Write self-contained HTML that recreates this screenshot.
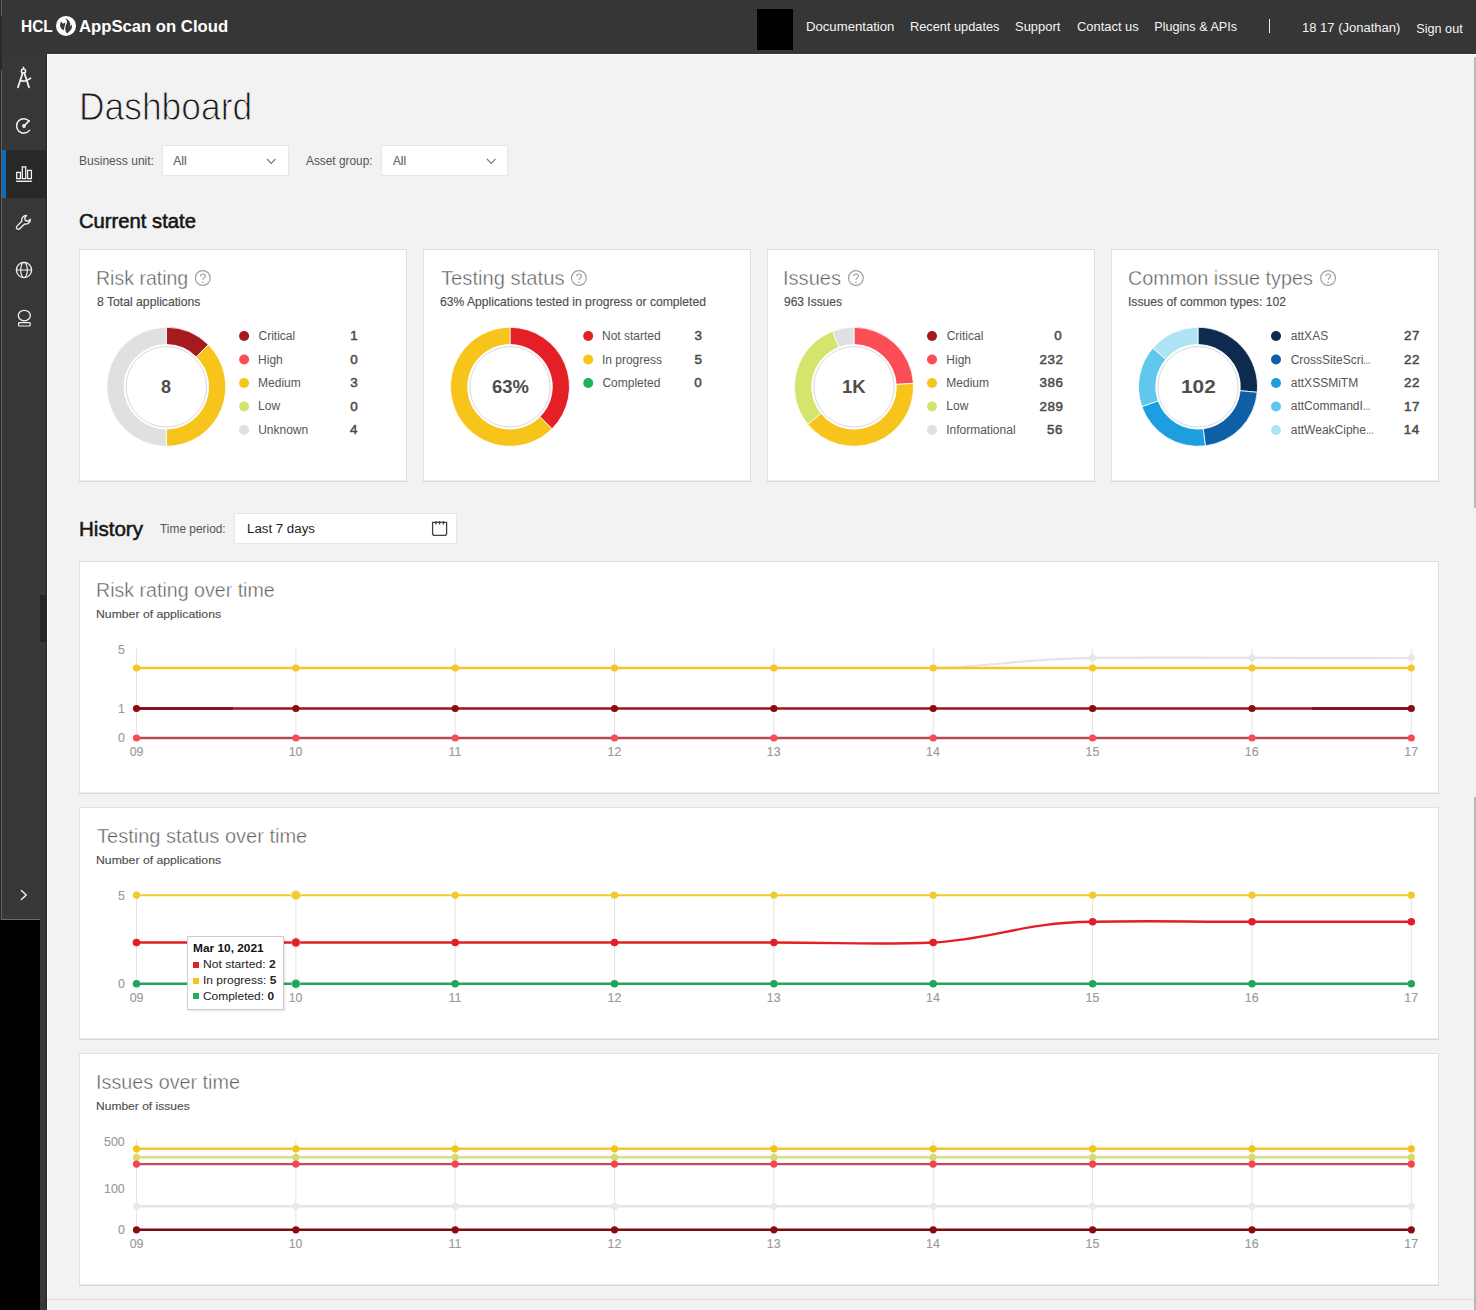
<!DOCTYPE html>
<html><head><meta charset="utf-8"><title>Dashboard</title>
<style>
html,body{margin:0;padding:0;}
body{width:1476px;height:1310px;position:relative;overflow:hidden;background:#f2f2f2;font-family:"Liberation Sans", sans-serif;}
body>div{position:absolute;}
.t{white-space:nowrap;}
svg{position:absolute;left:0;top:0;}
</style></head><body>
<div style="left:0px;top:0px;width:1476px;height:54px;background:#363636;"></div>
<div style="left:0px;top:54px;width:47px;height:866px;background:#373737;"></div>
<div style="left:0px;top:0px;width:1px;height:920px;background:#2a2a2a;"></div>
<div style="left:0px;top:920px;width:40px;height:390px;background:#000;"></div>
<div style="left:40px;top:920px;width:7px;height:390px;background:#383838;"></div>
<div style="left:1px;top:0px;width:1px;height:920px;background:#5e5e5e;"></div>
<div style="left:1px;top:919px;width:39px;height:1px;background:#6a6a6a;"></div>
<div style="left:1px;top:16px;width:1px;height:54px;background:#282828;"></div>
<div style="left:40px;top:595px;width:7px;height:47px;background:#262626;"></div>
<div style="left:46px;top:54px;width:1px;height:1256px;background:#262626;"></div>
<div style="left:47px;top:54px;width:1429px;height:1256px;background:#f2f2f2;"></div>
<div style="left:47px;top:54px;width:1429px;height:1px;background:#ffffff;"></div>
<div style="left:47px;top:54px;width:1px;height:1256px;background:#fdfdfd;"></div>
<div style="left:47px;top:1299px;width:1429px;height:1px;background:#dcdcdc;"></div>
<div style="left:2px;top:150px;width:45px;height:48px;background:#282828;"></div>
<div style="left:2px;top:150px;width:4px;height:48px;background:#0f6cb8;"></div>
<div style="left:757px;top:9px;width:36px;height:41px;background:#000;"></div>
<div style="left:1269px;top:19px;width:1px;height:14px;background:#f0f0f0;"></div>
<div style="left:1474px;top:57px;width:2px;height:451px;background:#b7b9ba;"></div>
<div style="left:1474px;top:797px;width:2px;height:513px;background:#b4b6b8;"></div>
<div style="left:162px;top:145px;width:127px;height:31px;background:#fff;box-shadow:0 0 0 1px #e6e6e6 inset;"></div>
<div style="left:381px;top:145px;width:127px;height:31px;background:#fff;box-shadow:0 0 0 1px #e6e6e6 inset;"></div>
<div style="left:79px;top:249px;width:328px;height:233px;background:#fff;border:1px solid #e0e0e0;border-bottom-color:#d6d6d6;box-sizing:border-box;box-shadow:inset 0 -2px 1px -1px #ebebeb;"></div>
<div style="left:423px;top:249px;width:328px;height:233px;background:#fff;border:1px solid #e0e0e0;border-bottom-color:#d6d6d6;box-sizing:border-box;box-shadow:inset 0 -2px 1px -1px #ebebeb;"></div>
<div style="left:767px;top:249px;width:328px;height:233px;background:#fff;border:1px solid #e0e0e0;border-bottom-color:#d6d6d6;box-sizing:border-box;box-shadow:inset 0 -2px 1px -1px #ebebeb;"></div>
<div style="left:1111px;top:249px;width:328px;height:233px;background:#fff;border:1px solid #e0e0e0;border-bottom-color:#d6d6d6;box-sizing:border-box;box-shadow:inset 0 -2px 1px -1px #ebebeb;"></div>
<div style="left:79px;top:561px;width:1360px;height:233px;background:#fff;border:1px solid #e0e0e0;border-bottom-color:#d6d6d6;box-sizing:border-box;box-shadow:inset 0 -2px 1px -1px #ebebeb;"></div>
<div style="left:79px;top:807px;width:1360px;height:233px;background:#fff;border:1px solid #e0e0e0;border-bottom-color:#d6d6d6;box-sizing:border-box;box-shadow:inset 0 -2px 1px -1px #ebebeb;"></div>
<div style="left:79px;top:1053px;width:1360px;height:233px;background:#fff;border:1px solid #e0e0e0;border-bottom-color:#d6d6d6;box-sizing:border-box;box-shadow:inset 0 -2px 1px -1px #ebebeb;"></div>
<div style="left:234px;top:513px;width:223px;height:31px;background:#fff;box-shadow:0 0 0 1px #e6e6e6 inset;"></div>
<svg width="1476" height="1310" viewBox="0 0 1476 1310">
<circle cx="202.8" cy="278" r="7.4" fill="none" stroke="#a0a0a0" stroke-width="1.2"/>
<path d="M200.5,276.2 C200.5,273.4 205.4,273.4 205.4,276 C205.4,278 202.8,278 202.8,280" fill="none" stroke="#a0a0a0" stroke-width="1.1"/>
<circle cx="202.8" cy="282.3" r="0.8" fill="#a0a0a0"/>
<circle cx="578.9" cy="278" r="7.4" fill="none" stroke="#a0a0a0" stroke-width="1.2"/>
<path d="M576.6,276.2 C576.6,273.4 581.5,273.4 581.5,276 C581.5,278 578.9,278 578.9,280" fill="none" stroke="#a0a0a0" stroke-width="1.1"/>
<circle cx="578.9" cy="282.3" r="0.8" fill="#a0a0a0"/>
<circle cx="855.9" cy="278" r="7.4" fill="none" stroke="#a0a0a0" stroke-width="1.2"/>
<path d="M853.6,276.2 C853.6,273.4 858.5,273.4 858.5,276 C858.5,278 855.9,278 855.9,280" fill="none" stroke="#a0a0a0" stroke-width="1.1"/>
<circle cx="855.9" cy="282.3" r="0.8" fill="#a0a0a0"/>
<circle cx="1328.1" cy="278" r="7.4" fill="none" stroke="#a0a0a0" stroke-width="1.2"/>
<path d="M1325.8,276.2 C1325.8,273.4 1330.7,273.4 1330.7,276 C1330.7,278 1328.1,278 1328.1,280" fill="none" stroke="#a0a0a0" stroke-width="1.1"/>
<circle cx="1328.1" cy="282.3" r="0.8" fill="#a0a0a0"/>
<path d="M166.30,327.30 A59.5,59.5 0 0 1 208.37,344.73 L196.21,356.89 A42.3,42.3 0 0 0 166.30,344.50 Z" fill="#a51a1d" stroke="#fff" stroke-width="0.8"/>
<path d="M208.37,344.73 A59.5,59.5 0 0 1 166.30,446.30 L166.30,429.10 A42.3,42.3 0 0 0 196.21,356.89 Z" fill="#f7c41c" stroke="#fff" stroke-width="0.8"/>
<path d="M166.30,446.30 A59.5,59.5 0 0 1 166.30,327.30 L166.30,344.50 A42.3,42.3 0 0 0 166.30,429.10 Z" fill="#e0e0e0" stroke="#fff" stroke-width="0.8"/>
<circle cx="166.3" cy="386.8" r="40.2" fill="#fff" stroke="#d8d9de" stroke-width="1"/>
<path d="M510.00,327.30 A59.5,59.5 0 0 1 552.07,428.87 L539.91,416.71 A42.3,42.3 0 0 0 510.00,344.50 Z" fill="#e41f26" stroke="#fff" stroke-width="0.8"/>
<path d="M552.07,428.87 A59.5,59.5 0 1 1 510.00,327.30 L510.00,344.50 A42.3,42.3 0 1 0 539.91,416.71 Z" fill="#f7c41c" stroke="#fff" stroke-width="0.8"/>
<circle cx="510" cy="386.8" r="40.2" fill="#fff" stroke="#d8d9de" stroke-width="1"/>
<path d="M854.00,327.30 A59.5,59.5 0 0 1 913.40,383.40 L896.23,384.39 A42.3,42.3 0 0 0 854.00,344.50 Z" fill="#fa4d56" stroke="#fff" stroke-width="0.8"/>
<path d="M913.40,383.40 A59.5,59.5 0 0 1 807.74,424.22 L821.11,413.40 A42.3,42.3 0 0 0 896.23,384.39 Z" fill="#f7c41c" stroke="#fff" stroke-width="0.8"/>
<path d="M807.74,424.22 A59.5,59.5 0 0 1 832.74,331.23 L838.89,347.29 A42.3,42.3 0 0 0 821.11,413.40 Z" fill="#d4e46c" stroke="#fff" stroke-width="0.8"/>
<path d="M832.74,331.23 A59.5,59.5 0 0 1 854.00,327.30 L854.00,344.50 A42.3,42.3 0 0 0 838.89,347.29 Z" fill="#e0e0e0" stroke="#fff" stroke-width="0.8"/>
<circle cx="854" cy="386.8" r="40.2" fill="#fff" stroke="#d8d9de" stroke-width="1"/>
<path d="M1198.00,327.30 A59.5,59.5 0 0 1 1257.25,392.29 L1240.12,390.70 A42.3,42.3 0 0 0 1198.00,344.50 Z" fill="#0d2b4e" stroke="#fff" stroke-width="0.8"/>
<path d="M1257.25,392.29 A59.5,59.5 0 0 1 1205.31,445.85 L1203.20,428.78 A42.3,42.3 0 0 0 1240.12,390.70 Z" fill="#0f5fa6" stroke="#fff" stroke-width="0.8"/>
<path d="M1205.31,445.85 A59.5,59.5 0 0 1 1141.88,406.58 L1158.10,400.86 A42.3,42.3 0 0 0 1203.20,428.78 Z" fill="#1d9ee0" stroke="#fff" stroke-width="0.8"/>
<path d="M1141.88,406.58 A59.5,59.5 0 0 1 1152.82,348.09 L1165.88,359.28 A42.3,42.3 0 0 0 1158.10,400.86 Z" fill="#62c7ec" stroke="#fff" stroke-width="0.8"/>
<path d="M1152.82,348.09 A59.5,59.5 0 0 1 1198.00,327.30 L1198.00,344.50 A42.3,42.3 0 0 0 1165.88,359.28 Z" fill="#aee3f3" stroke="#fff" stroke-width="0.8"/>
<circle cx="1198" cy="386.8" r="40.2" fill="#fff" stroke="#d8d9de" stroke-width="1"/>
<circle cx="244.1" cy="336.0" r="5" fill="#a51a1d"/>
<circle cx="244.1" cy="359.5" r="5" fill="#fa4d56"/>
<circle cx="244.1" cy="383.0" r="5" fill="#f7c41c"/>
<circle cx="244.1" cy="406.5" r="5" fill="#d4e46c"/>
<circle cx="244.1" cy="430.0" r="5" fill="#e0e0e0"/>
<circle cx="588.2" cy="336.0" r="5" fill="#e41f26"/>
<circle cx="588.2" cy="359.5" r="5" fill="#f7c41c"/>
<circle cx="588.2" cy="383.0" r="5" fill="#1db35c"/>
<circle cx="932" cy="336.0" r="5" fill="#a51a1d"/>
<circle cx="932" cy="359.5" r="5" fill="#fa4d56"/>
<circle cx="932" cy="383.0" r="5" fill="#f7c41c"/>
<circle cx="932" cy="406.5" r="5" fill="#d4e46c"/>
<circle cx="932" cy="430.0" r="5" fill="#e0e0e0"/>
<circle cx="1276" cy="336.0" r="5" fill="#0d2b4e"/>
<circle cx="1276" cy="359.5" r="5" fill="#0f5fa6"/>
<circle cx="1276" cy="383.0" r="5" fill="#1d9ee0"/>
<circle cx="1276" cy="406.5" r="5" fill="#62c7ec"/>
<circle cx="1276" cy="430.0" r="5" fill="#aee3f3"/>
<line x1="136.5" y1="648.5" x2="136.5" y2="738" stroke="#e4e4e4" stroke-width="1"/>
<line x1="295.85" y1="648.5" x2="295.85" y2="738" stroke="#e4e4e4" stroke-width="1"/>
<line x1="455.2" y1="648.5" x2="455.2" y2="738" stroke="#e4e4e4" stroke-width="1"/>
<line x1="614.55" y1="648.5" x2="614.55" y2="738" stroke="#e4e4e4" stroke-width="1"/>
<line x1="773.9" y1="648.5" x2="773.9" y2="738" stroke="#e4e4e4" stroke-width="1"/>
<line x1="933.25" y1="648.5" x2="933.25" y2="738" stroke="#e4e4e4" stroke-width="1"/>
<line x1="1092.6" y1="648.5" x2="1092.6" y2="738" stroke="#e4e4e4" stroke-width="1"/>
<line x1="1251.95" y1="648.5" x2="1251.95" y2="738" stroke="#e4e4e4" stroke-width="1"/>
<line x1="1411.3" y1="648.5" x2="1411.3" y2="738" stroke="#e4e4e4" stroke-width="1"/>
<path d="M136.5,668 L933.2,668 C978.2,668 1022.6,658.6 1092.6,657.8 C1152.6,657.2 1192.0,657.8 1252.0,657.8 L1411.3,658" fill="none" stroke="#e4e4e4" stroke-width="2.2"/>
<circle cx="1092.6" cy="657.8" r="3.4" fill="#e6e6e6"/>
<circle cx="1252.0" cy="657.8" r="3.4" fill="#e6e6e6"/>
<circle cx="1411.3" cy="657.8" r="3.4" fill="#e6e6e6"/>
<path d="M136.5,668 L295.9,668 L455.2,668 L614.5,668 L773.9,668 L933.2,668 L1092.6,668 L1252.0,668 L1411.3,668" fill="none" stroke="#f5c52a" stroke-width="2.6"/>
<circle cx="136.5" cy="668" r="3.6" fill="#f5c52a"/>
<circle cx="295.9" cy="668" r="3.6" fill="#f5c52a"/>
<circle cx="455.2" cy="668" r="3.6" fill="#f5c52a"/>
<circle cx="614.5" cy="668" r="3.6" fill="#f5c52a"/>
<circle cx="773.9" cy="668" r="3.6" fill="#f5c52a"/>
<circle cx="933.2" cy="668" r="3.6" fill="#f5c52a"/>
<circle cx="1092.6" cy="668" r="3.6" fill="#f5c52a"/>
<circle cx="1252.0" cy="668" r="3.6" fill="#f5c52a"/>
<circle cx="1411.3" cy="668" r="3.6" fill="#f5c52a"/>
<path d="M136.5,708.5 L295.9,708.5 L455.2,708.5 L614.5,708.5 L773.9,708.5 L933.2,708.5 L1092.6,708.5 L1252.0,708.5 L1411.3,708.5" fill="none" stroke="#9a1520" stroke-width="2.4"/>
<path d="M136.5,708.5 L233,708.5 M1312,708.5 L1411,708.5" stroke="#820b12" stroke-width="2.6"/>
<circle cx="136.5" cy="708.5" r="3.6" fill="#8a0b12"/>
<circle cx="295.9" cy="708.5" r="3.6" fill="#8a0b12"/>
<circle cx="455.2" cy="708.5" r="3.6" fill="#8a0b12"/>
<circle cx="614.5" cy="708.5" r="3.6" fill="#8a0b12"/>
<circle cx="773.9" cy="708.5" r="3.6" fill="#8a0b12"/>
<circle cx="933.2" cy="708.5" r="3.6" fill="#8a0b12"/>
<circle cx="1092.6" cy="708.5" r="3.6" fill="#8a0b12"/>
<circle cx="1252.0" cy="708.5" r="3.6" fill="#8a0b12"/>
<circle cx="1411.3" cy="708.5" r="3.6" fill="#8a0b12"/>
<path d="M136.5,738 L295.9,738 L455.2,738 L614.5,738 L773.9,738 L933.2,738 L1092.6,738 L1252.0,738 L1411.3,738" fill="none" stroke="#b44a58" stroke-width="2.3"/>
<circle cx="136.5" cy="738" r="3.6" fill="#f74b57"/>
<circle cx="295.9" cy="738" r="3.6" fill="#f74b57"/>
<circle cx="455.2" cy="738" r="3.6" fill="#f74b57"/>
<circle cx="614.5" cy="738" r="3.6" fill="#f74b57"/>
<circle cx="773.9" cy="738" r="3.6" fill="#f74b57"/>
<circle cx="933.2" cy="738" r="3.6" fill="#f74b57"/>
<circle cx="1092.6" cy="738" r="3.6" fill="#f74b57"/>
<circle cx="1252.0" cy="738" r="3.6" fill="#f74b57"/>
<circle cx="1411.3" cy="738" r="3.6" fill="#f74b57"/>
<line x1="136.5" y1="895" x2="136.5" y2="984" stroke="#e4e4e4" stroke-width="1"/>
<line x1="295.85" y1="895" x2="295.85" y2="984" stroke="#e4e4e4" stroke-width="1"/>
<line x1="455.2" y1="895" x2="455.2" y2="984" stroke="#e4e4e4" stroke-width="1"/>
<line x1="614.55" y1="895" x2="614.55" y2="984" stroke="#e4e4e4" stroke-width="1"/>
<line x1="773.9" y1="895" x2="773.9" y2="984" stroke="#e4e4e4" stroke-width="1"/>
<line x1="933.25" y1="895" x2="933.25" y2="984" stroke="#e4e4e4" stroke-width="1"/>
<line x1="1092.6" y1="895" x2="1092.6" y2="984" stroke="#e4e4e4" stroke-width="1"/>
<line x1="1251.95" y1="895" x2="1251.95" y2="984" stroke="#e4e4e4" stroke-width="1"/>
<line x1="1411.3" y1="895" x2="1411.3" y2="984" stroke="#e4e4e4" stroke-width="1"/>
<path d="M136.5,895.2 L295.9,895.2 L455.2,895.2 L614.5,895.2 L773.9,895.2 L933.2,895.2 L1092.6,895.2 L1252.0,895.2 L1411.3,895.2" fill="none" stroke="#efcb2c" stroke-width="2.0"/>
<circle cx="136.5" cy="895.2" r="3.6" fill="#efcb2c"/>
<circle cx="295.9" cy="895.2" r="3.6" fill="#efcb2c"/>
<circle cx="455.2" cy="895.2" r="3.6" fill="#efcb2c"/>
<circle cx="614.5" cy="895.2" r="3.6" fill="#efcb2c"/>
<circle cx="773.9" cy="895.2" r="3.6" fill="#efcb2c"/>
<circle cx="933.2" cy="895.2" r="3.6" fill="#efcb2c"/>
<circle cx="1092.6" cy="895.2" r="3.6" fill="#efcb2c"/>
<circle cx="1252.0" cy="895.2" r="3.6" fill="#efcb2c"/>
<circle cx="1411.3" cy="895.2" r="3.6" fill="#efcb2c"/>
<path d="M136.5,942.5 L773.9,942.5 C843.9,942.5 873.2,945.0 933.2,942.5 C993.2,939.5 1022.6,922.1999999999999 1092.6,921.8 C1152.6,920.4 1182.0,921.8 1252.0,921.8 L1411.3,921.8" fill="none" stroke="#e21f26" stroke-width="2.4"/>
<circle cx="136.5" cy="942.5" r="3.8" fill="#e21f26"/>
<circle cx="295.9" cy="942.5" r="3.8" fill="#e21f26"/>
<circle cx="455.2" cy="942.5" r="3.8" fill="#e21f26"/>
<circle cx="614.5" cy="942.5" r="3.8" fill="#e21f26"/>
<circle cx="773.9" cy="942.5" r="3.8" fill="#e21f26"/>
<circle cx="933.2" cy="942.5" r="3.8" fill="#e21f26"/>
<circle cx="1092.6" cy="921.8" r="3.8" fill="#e21f26"/>
<circle cx="1252.0" cy="921.8" r="3.8" fill="#e21f26"/>
<circle cx="1411.3" cy="921.8" r="3.8" fill="#e21f26"/>
<path d="M136.5,983.8 L295.9,983.8 L455.2,983.8 L614.5,983.8 L773.9,983.8 L933.2,983.8 L1092.6,983.8 L1252.0,983.8 L1411.3,983.8" fill="none" stroke="#22a45c" stroke-width="2.5"/>
<circle cx="136.5" cy="983.8" r="3.8" fill="#22a45c"/>
<circle cx="295.9" cy="983.8" r="3.8" fill="#22a45c"/>
<circle cx="455.2" cy="983.8" r="3.8" fill="#22a45c"/>
<circle cx="614.5" cy="983.8" r="3.8" fill="#22a45c"/>
<circle cx="773.9" cy="983.8" r="3.8" fill="#22a45c"/>
<circle cx="933.2" cy="983.8" r="3.8" fill="#22a45c"/>
<circle cx="1092.6" cy="983.8" r="3.8" fill="#22a45c"/>
<circle cx="1252.0" cy="983.8" r="3.8" fill="#22a45c"/>
<circle cx="1411.3" cy="983.8" r="3.8" fill="#22a45c"/>
<circle cx="295.9" cy="895.2" r="4.3" fill="#efcb2c" stroke="#f5dc84" stroke-width="1.2"/>
<circle cx="295.9" cy="942.5" r="4.3" fill="#e21f26" stroke="#f08a8d" stroke-width="0.8"/>
<circle cx="295.9" cy="983.8" r="4.3" fill="#22a45c" stroke="#8fd6ab" stroke-width="0.8"/>
<line x1="136.5" y1="1140.3" x2="136.5" y2="1229.8" stroke="#e4e4e4" stroke-width="1"/>
<line x1="295.85" y1="1140.3" x2="295.85" y2="1229.8" stroke="#e4e4e4" stroke-width="1"/>
<line x1="455.2" y1="1140.3" x2="455.2" y2="1229.8" stroke="#e4e4e4" stroke-width="1"/>
<line x1="614.55" y1="1140.3" x2="614.55" y2="1229.8" stroke="#e4e4e4" stroke-width="1"/>
<line x1="773.9" y1="1140.3" x2="773.9" y2="1229.8" stroke="#e4e4e4" stroke-width="1"/>
<line x1="933.25" y1="1140.3" x2="933.25" y2="1229.8" stroke="#e4e4e4" stroke-width="1"/>
<line x1="1092.6" y1="1140.3" x2="1092.6" y2="1229.8" stroke="#e4e4e4" stroke-width="1"/>
<line x1="1251.95" y1="1140.3" x2="1251.95" y2="1229.8" stroke="#e4e4e4" stroke-width="1"/>
<line x1="1411.3" y1="1140.3" x2="1411.3" y2="1229.8" stroke="#e4e4e4" stroke-width="1"/>
<path d="M136.5,1206.3 L295.9,1206.3 L455.2,1206.3 L614.5,1206.3 L773.9,1206.3 L933.2,1206.3 L1092.6,1206.3 L1252.0,1206.3 L1411.3,1206.3" fill="none" stroke="#e6e6e6" stroke-width="2.4"/>
<circle cx="136.5" cy="1206.3" r="3.6" fill="#e9e9e9"/>
<circle cx="295.9" cy="1206.3" r="3.6" fill="#e9e9e9"/>
<circle cx="455.2" cy="1206.3" r="3.6" fill="#e9e9e9"/>
<circle cx="614.5" cy="1206.3" r="3.6" fill="#e9e9e9"/>
<circle cx="773.9" cy="1206.3" r="3.6" fill="#e9e9e9"/>
<circle cx="933.2" cy="1206.3" r="3.6" fill="#e9e9e9"/>
<circle cx="1092.6" cy="1206.3" r="3.6" fill="#e9e9e9"/>
<circle cx="1252.0" cy="1206.3" r="3.6" fill="#e9e9e9"/>
<circle cx="1411.3" cy="1206.3" r="3.6" fill="#e9e9e9"/>
<path d="M136.5,1148.8 L295.9,1148.8 L455.2,1148.8 L614.5,1148.8 L773.9,1148.8 L933.2,1148.8 L1092.6,1148.8 L1252.0,1148.8 L1411.3,1148.8" fill="none" stroke="#f4c42a" stroke-width="2.4"/>
<circle cx="136.5" cy="1148.8" r="3.6" fill="#f5c21b"/>
<circle cx="295.9" cy="1148.8" r="3.6" fill="#f5c21b"/>
<circle cx="455.2" cy="1148.8" r="3.6" fill="#f5c21b"/>
<circle cx="614.5" cy="1148.8" r="3.6" fill="#f5c21b"/>
<circle cx="773.9" cy="1148.8" r="3.6" fill="#f5c21b"/>
<circle cx="933.2" cy="1148.8" r="3.6" fill="#f5c21b"/>
<circle cx="1092.6" cy="1148.8" r="3.6" fill="#f5c21b"/>
<circle cx="1252.0" cy="1148.8" r="3.6" fill="#f5c21b"/>
<circle cx="1411.3" cy="1148.8" r="3.6" fill="#f5c21b"/>
<path d="M136.5,1157.3 L295.9,1157.3 L455.2,1157.3 L614.5,1157.3 L773.9,1157.3 L933.2,1157.3 L1092.6,1157.3 L1252.0,1157.3 L1411.3,1157.3" fill="none" stroke="#d8e27e" stroke-width="2.4"/>
<circle cx="136.5" cy="1157.3" r="3.6" fill="#d2de68"/>
<circle cx="295.9" cy="1157.3" r="3.6" fill="#d2de68"/>
<circle cx="455.2" cy="1157.3" r="3.6" fill="#d2de68"/>
<circle cx="614.5" cy="1157.3" r="3.6" fill="#d2de68"/>
<circle cx="773.9" cy="1157.3" r="3.6" fill="#d2de68"/>
<circle cx="933.2" cy="1157.3" r="3.6" fill="#d2de68"/>
<circle cx="1092.6" cy="1157.3" r="3.6" fill="#d2de68"/>
<circle cx="1252.0" cy="1157.3" r="3.6" fill="#d2de68"/>
<circle cx="1411.3" cy="1157.3" r="3.6" fill="#d2de68"/>
<path d="M136.5,1164.1 L295.9,1164.1 L455.2,1164.1 L614.5,1164.1 L773.9,1164.1 L933.2,1164.1 L1092.6,1164.1 L1252.0,1164.1 L1411.3,1164.1" fill="none" stroke="#bf4b5a" stroke-width="2.4"/>
<circle cx="136.5" cy="1164.1" r="3.6" fill="#f7434f"/>
<circle cx="295.9" cy="1164.1" r="3.6" fill="#f7434f"/>
<circle cx="455.2" cy="1164.1" r="3.6" fill="#f7434f"/>
<circle cx="614.5" cy="1164.1" r="3.6" fill="#f7434f"/>
<circle cx="773.9" cy="1164.1" r="3.6" fill="#f7434f"/>
<circle cx="933.2" cy="1164.1" r="3.6" fill="#f7434f"/>
<circle cx="1092.6" cy="1164.1" r="3.6" fill="#f7434f"/>
<circle cx="1252.0" cy="1164.1" r="3.6" fill="#f7434f"/>
<circle cx="1411.3" cy="1164.1" r="3.6" fill="#f7434f"/>
<path d="M136.5,1229.8 L295.9,1229.8 L455.2,1229.8 L614.5,1229.8 L773.9,1229.8 L933.2,1229.8 L1092.6,1229.8 L1252.0,1229.8 L1411.3,1229.8" fill="none" stroke="#7a0c12" stroke-width="2.4"/>
<circle cx="136.5" cy="1229.8" r="3.6" fill="#880c12"/>
<circle cx="295.9" cy="1229.8" r="3.6" fill="#880c12"/>
<circle cx="455.2" cy="1229.8" r="3.6" fill="#880c12"/>
<circle cx="614.5" cy="1229.8" r="3.6" fill="#880c12"/>
<circle cx="773.9" cy="1229.8" r="3.6" fill="#880c12"/>
<circle cx="933.2" cy="1229.8" r="3.6" fill="#880c12"/>
<circle cx="1092.6" cy="1229.8" r="3.6" fill="#880c12"/>
<circle cx="1252.0" cy="1229.8" r="3.6" fill="#880c12"/>
<circle cx="1411.3" cy="1229.8" r="3.6" fill="#880c12"/>
<g fill="none" stroke="#f2f2f2" stroke-width="1.6" stroke-linecap="round">
<circle cx="23.5" cy="71" r="2.1" stroke-width="1.5"/>
<path d="M23.5,67.2 L23.5,68.6" stroke-width="1.4"/>
<path d="M22.6,73.2 L18,87.3 M24.4,73.2 L29,87.3" stroke-width="1.8"/>
<path d="M20.6,80.6 Q23.6,81.8 27,80.2 L30.6,78.2" stroke-width="1.6"/>
<path d="M29.1,120.9 A7.25,7.25 0 1 0 29.5,130.4" stroke-width="1.5"/>
<path d="M24,126 L29.1,120.9" stroke-width="1.7"/>
<circle cx="24" cy="126" r="1.9" fill="#f2f2f2" stroke="none"/>
<rect x="16.7" y="172.4" width="3.7" height="6.2" stroke-width="1.3"/>
<rect x="22.3" y="166.9" width="3.4" height="11.7" stroke-width="1.3"/>
<rect x="27.6" y="170.4" width="3.8" height="8.2" stroke-width="1.3"/>
<path d="M16.2,181.3 L31.8,181.3" stroke-width="1.4" stroke-linecap="butt"/>
<path d="M26.6,215.5 A4.6,4.6 0 0 0 21.8,221.3 L17,226.1 A1.9,1.9 0 0 0 19.7,228.8 L24.5,224 A4.6,4.6 0 0 0 30.3,219.2 L28.1,221.2 L25.4,220.5 L24.7,217.8 Z" stroke-width="1.3" stroke-linejoin="round"/>
<circle cx="24" cy="270" r="7.6" stroke-width="1.3"/>
<path d="M16.4,270 L31.6,270" stroke-width="1.2"/><ellipse cx="24" cy="270" rx="3.3" ry="7.6" stroke-width="1.2"/>
<ellipse cx="24.3" cy="315.6" rx="6" ry="5.3" stroke-width="1.3"/>
<rect x="18.6" y="322.6" width="11.6" height="3.4" rx="0.8" stroke-width="1.2"/>
<path d="M21.4,890.5 L26.2,895 L21.4,899.5" stroke-width="1.4"/>
</g>
<circle cx="66" cy="25.9" r="10" fill="#fff"/>
<path d="M64.8,18.2 C67.5,19 70.3,21 70.3,24.5 C70.3,25.5 70,26.3 69.7,26.8 C70.6,26.2 71.3,25.4 71.7,24.6 C72.6,27.5 71.5,30.5 67,33.4 C65.5,31.5 64.9,29.5 65.3,27.5 C65.6,25.8 66.5,24.3 67,22.5 C67.3,20.8 66.3,19.2 64.8,18.2 Z M61.2,21.2 C60,23 59.8,25.5 60.5,27.2 C61.2,28.8 62.5,29.7 64,30.2 C64,28 64.6,26.5 65.2,24.8 C65.4,23.8 65.2,22.8 64.8,22.3 C64.6,23.2 63.9,23.6 63.2,23.5 C62.2,23.3 61.5,22.4 61.2,21.2 Z" fill="#383838"/>
<path d="M267,159 L271.2,163.5 L275.4,159" fill="none" stroke="#777" stroke-width="1.1"/>
<path d="M487,159 L491.2,163.5 L495.4,159" fill="none" stroke="#777" stroke-width="1.1"/>
<g fill="none" stroke="#3a4244" stroke-width="1.3"><path d="M432.6,522.4 L446.6,522.4 L446.6,533.2 Q446.6,535.4 444.4,535.4 L434.8,535.4 Q432.6,535.4 432.6,533.2 Z M435.9,521 L435.9,524.6 M439.6,521 L439.6,524.6 M443.4,521 L443.4,524.6"/></g>
</svg>
<div class="t" style="top:21px;font-size:12.645px;line-height:12.645px;color:#f4f4f4;left:806.42px;transform:scaleX(1.0409);transform-origin:0 0;">Documentation</div>
<div class="t" style="top:21px;font-size:12.645px;line-height:12.645px;color:#f4f4f4;left:909.85px;transform:scaleX(1.0116);transform-origin:0 0;">Recent updates</div>
<div class="t" style="top:21px;font-size:12.645px;line-height:12.645px;color:#f4f4f4;left:1015.21px;transform:scaleX(1.0248);transform-origin:0 0;">Support</div>
<div class="t" style="top:21px;font-size:12.645px;line-height:12.645px;color:#f4f4f4;left:1076.65px;transform:scaleX(1.0226);transform-origin:0 0;">Contact us</div>
<div class="t" style="top:21px;font-size:12.645px;line-height:12.645px;color:#f4f4f4;left:1154.26px;">Plugins &amp; APIs</div>
<div class="t" style="top:21px;font-size:13.227px;line-height:13.227px;color:#f4f4f4;left:1302.11px;transform:scaleX(0.9839);transform-origin:0 0;">18 17 (Jonathan)</div>
<div class="t" style="top:23px;font-size:12.645px;line-height:12.645px;color:#f4f4f4;left:1416.33px;">Sign out</div>
<div class="t" style="top:18px;font-size:17.006px;line-height:17.006px;color:#fff;font-weight:700;left:20.97px;transform:scaleX(0.9072);transform-origin:0 0;">HCL</div>
<div class="t" style="top:18px;font-size:17.006px;line-height:17.006px;color:#fff;font-weight:700;left:79.48px;transform:scaleX(0.9804);transform-origin:0 0;">AppScan on Cloud</div>
<div class="t" style="top:87px;font-size:39.099px;line-height:39.099px;color:#1a1a1a;left:79.30px;transform:scaleX(0.9054);transform-origin:0 0;-webkit-text-stroke:1.0px #f2f2f2;">Dashboard</div>
<div class="t" style="top:155px;font-size:12.645px;line-height:12.645px;color:#555;left:79.01px;transform:scaleX(0.9538);transform-origin:0 0;">Business unit:</div>
<div class="t" style="top:155px;font-size:12.064px;line-height:12.064px;color:#6a6a6a;-webkit-text-stroke:0.2px #6a6a6a;left:173.18px;">All</div>
<div class="t" style="top:155px;font-size:12.645px;line-height:12.645px;color:#555;left:306.48px;transform:scaleX(0.9396);transform-origin:0 0;">Asset group:</div>
<div class="t" style="top:155px;font-size:12.064px;line-height:12.064px;color:#6a6a6a;-webkit-text-stroke:0.2px #6a6a6a;left:392.68px;transform:scaleX(0.9780);transform-origin:0 0;">All</div>
<div class="t" style="top:212px;font-size:19.331px;line-height:19.331px;color:#161616;-webkit-text-stroke:0.55px #161616;left:79.28px;transform:scaleX(1.0472);transform-origin:0 0;">Current state</div>
<div class="t" style="top:523px;font-size:12.064px;line-height:12.064px;color:#555;left:160.43px;transform:scaleX(0.9874);transform-origin:0 0;">Time period:</div>
<div class="t" style="top:522px;font-size:13.227px;line-height:13.227px;color:#222;left:246.81px;transform:scaleX(1.0047);transform-origin:0 0;">Last 7 days</div>
<div class="t" style="top:519px;font-size:20.785px;line-height:20.785px;color:#161616;-webkit-text-stroke:0.55px #161616;left:78.91px;transform:scaleX(0.9900);transform-origin:0 0;">History</div>
<div class="t" style="top:268px;font-size:20.494px;line-height:20.494px;color:#5e5e5e;left:96.15px;transform:scaleX(0.9530);transform-origin:0 0;-webkit-text-stroke:0.4px #fff;">Risk rating</div>
<div class="t" style="top:297px;font-size:11.919px;line-height:11.919px;color:#4f4f4f;-webkit-text-stroke:0.15px #4f4f4f;left:96.72px;transform:scaleX(1.0238);transform-origin:0 0;">8 Total applications</div>
<div class="t" style="top:268px;font-size:20.494px;line-height:20.494px;color:#5e5e5e;left:440.55px;transform:scaleX(0.9862);transform-origin:0 0;-webkit-text-stroke:0.4px #fff;">Testing status</div>
<div class="t" style="top:297px;font-size:11.919px;line-height:11.919px;color:#4f4f4f;-webkit-text-stroke:0.15px #4f4f4f;left:439.89px;transform:scaleX(1.0198);transform-origin:0 0;">63% Applications tested in progress or completed</div>
<div class="t" style="top:268px;font-size:20.494px;line-height:20.494px;color:#5e5e5e;left:783.05px;transform:scaleX(0.9805);transform-origin:0 0;-webkit-text-stroke:0.4px #fff;">Issues</div>
<div class="t" style="top:297px;font-size:11.919px;line-height:11.919px;color:#4f4f4f;-webkit-text-stroke:0.15px #4f4f4f;left:783.84px;transform:scaleX(1.0060);transform-origin:0 0;">963 Issues</div>
<div class="t" style="top:268px;font-size:20.494px;line-height:20.494px;color:#5e5e5e;left:1128.20px;transform:scaleX(0.9669);transform-origin:0 0;-webkit-text-stroke:0.4px #fff;">Common issue types</div>
<div class="t" style="top:297px;font-size:11.919px;line-height:11.919px;color:#4f4f4f;-webkit-text-stroke:0.15px #4f4f4f;left:1127.58px;transform:scaleX(1.0200);transform-origin:0 0;">Issues of common types: 102</div>
<div class="t" style="top:379px;font-size:17.733px;line-height:17.733px;color:#4e4e4e;font-weight:700;left:161.33px;transform:scaleX(1.0160);transform-origin:0 0;">8</div>
<div class="t" style="top:379px;font-size:17.733px;line-height:17.733px;color:#4e4e4e;font-weight:700;left:491.53px;transform:scaleX(1.0412);transform-origin:0 0;">63%</div>
<div class="t" style="top:379px;font-size:17.733px;line-height:17.733px;color:#4e4e4e;font-weight:700;left:842.23px;transform:scaleX(1.0474);transform-origin:0 0;">1K</div>
<div class="t" style="top:379px;font-size:17.733px;line-height:17.733px;color:#4e4e4e;font-weight:700;left:1180.69px;transform:scaleX(1.1743);transform-origin:0 0;">102</div>
<div class="t" style="top:330px;font-size:12.000px;line-height:12.000px;color:#565656;left:258.49px;">Critical</div>
<div class="t" style="top:329px;font-size:13.400px;line-height:13.400px;color:#4a4a4a;-webkit-text-stroke:0.5px #4a4a4a;letter-spacing:0.55px;left:350.30px;">1</div>
<div class="t" style="top:354px;font-size:12.000px;line-height:12.000px;color:#565656;left:258.12px;">High</div>
<div class="t" style="top:353px;font-size:13.400px;line-height:13.400px;color:#4a4a4a;-webkit-text-stroke:0.5px #4a4a4a;letter-spacing:0.55px;left:350.17px;">0</div>
<div class="t" style="top:377px;font-size:12.000px;line-height:12.000px;color:#565656;left:258.12px;">Medium</div>
<div class="t" style="top:376px;font-size:13.400px;line-height:13.400px;color:#4a4a4a;-webkit-text-stroke:0.5px #4a4a4a;letter-spacing:0.55px;left:350.23px;">3</div>
<div class="t" style="top:400px;font-size:12.000px;line-height:12.000px;color:#565656;left:258.12px;">Low</div>
<div class="t" style="top:400px;font-size:13.400px;line-height:13.400px;color:#4a4a4a;-webkit-text-stroke:0.5px #4a4a4a;letter-spacing:0.55px;left:350.17px;">0</div>
<div class="t" style="top:424px;font-size:12.000px;line-height:12.000px;color:#565656;left:258.18px;">Unknown</div>
<div class="t" style="top:423px;font-size:13.400px;line-height:13.400px;color:#4a4a4a;-webkit-text-stroke:0.5px #4a4a4a;letter-spacing:0.55px;left:350.04px;">4</div>
<div class="t" style="top:330px;font-size:12.000px;line-height:12.000px;color:#565656;left:602.02px;">Not started</div>
<div class="t" style="top:329px;font-size:13.400px;line-height:13.400px;color:#4a4a4a;-webkit-text-stroke:0.5px #4a4a4a;letter-spacing:0.55px;left:694.43px;">3</div>
<div class="t" style="top:354px;font-size:12.000px;line-height:12.000px;color:#565656;left:601.90px;">In progress</div>
<div class="t" style="top:353px;font-size:13.400px;line-height:13.400px;color:#4a4a4a;-webkit-text-stroke:0.5px #4a4a4a;letter-spacing:0.55px;left:694.41px;">5</div>
<div class="t" style="top:377px;font-size:12.000px;line-height:12.000px;color:#565656;left:602.39px;">Completed</div>
<div class="t" style="top:376px;font-size:13.400px;line-height:13.400px;color:#4a4a4a;-webkit-text-stroke:0.5px #4a4a4a;letter-spacing:0.55px;left:694.37px;">0</div>
<div class="t" style="top:330px;font-size:12.000px;line-height:12.000px;color:#565656;left:946.69px;">Critical</div>
<div class="t" style="top:329px;font-size:13.400px;line-height:13.400px;color:#4a4a4a;-webkit-text-stroke:0.5px #4a4a4a;letter-spacing:0.55px;left:1054.37px;">0</div>
<div class="t" style="top:354px;font-size:12.000px;line-height:12.000px;color:#565656;left:946.32px;">High</div>
<div class="t" style="top:353px;font-size:13.400px;line-height:13.400px;color:#4a4a4a;-webkit-text-stroke:0.5px #4a4a4a;letter-spacing:0.55px;left:1039.61px;">232</div>
<div class="t" style="top:377px;font-size:12.000px;line-height:12.000px;color:#565656;left:946.32px;">Medium</div>
<div class="t" style="top:376px;font-size:13.400px;line-height:13.400px;color:#4a4a4a;-webkit-text-stroke:0.5px #4a4a4a;letter-spacing:0.55px;left:1039.52px;">386</div>
<div class="t" style="top:400px;font-size:12.000px;line-height:12.000px;color:#565656;left:946.32px;">Low</div>
<div class="t" style="top:400px;font-size:13.400px;line-height:13.400px;color:#4a4a4a;-webkit-text-stroke:0.5px #4a4a4a;letter-spacing:0.55px;left:1039.57px;">289</div>
<div class="t" style="top:424px;font-size:12.000px;line-height:12.000px;color:#565656;left:946.20px;">Informational</div>
<div class="t" style="top:423px;font-size:13.400px;line-height:13.400px;color:#4a4a4a;-webkit-text-stroke:0.5px #4a4a4a;letter-spacing:0.55px;left:1046.98px;">56</div>
<div class="t" style="top:330px;font-size:12.000px;line-height:12.000px;color:#565656;left:1290.79px;">attXAS</div>
<div class="t" style="top:329px;font-size:13.400px;line-height:13.400px;color:#4a4a4a;-webkit-text-stroke:0.5px #4a4a4a;letter-spacing:0.55px;left:1403.97px;">27</div>
<div class="t" style="top:354px;font-size:12.000px;line-height:12.000px;color:#565656;left:1290.69px;">CrossSiteScri<span style="display:inline-block;transform:scaleX(0.62);transform-origin:0 50%">…</span></div>
<div class="t" style="top:353px;font-size:13.400px;line-height:13.400px;color:#4a4a4a;-webkit-text-stroke:0.5px #4a4a4a;letter-spacing:0.55px;left:1403.97px;">22</div>
<div class="t" style="top:377px;font-size:12.000px;line-height:12.000px;color:#565656;left:1290.79px;">attXSSMiTM</div>
<div class="t" style="top:376px;font-size:13.400px;line-height:13.400px;color:#4a4a4a;-webkit-text-stroke:0.5px #4a4a4a;letter-spacing:0.55px;left:1403.97px;">22</div>
<div class="t" style="top:400px;font-size:12.000px;line-height:12.000px;color:#565656;left:1290.79px;">attCommandI<span style="display:inline-block;transform:scaleX(0.62);transform-origin:0 50%">…</span></div>
<div class="t" style="top:400px;font-size:13.400px;line-height:13.400px;color:#4a4a4a;-webkit-text-stroke:0.5px #4a4a4a;letter-spacing:0.55px;left:1403.97px;">17</div>
<div class="t" style="top:424px;font-size:12.000px;line-height:12.000px;color:#565656;left:1290.79px;">attWeakCiphe<span style="display:inline-block;transform:scaleX(0.62);transform-origin:0 50%">…</span></div>
<div class="t" style="top:423px;font-size:13.400px;line-height:13.400px;color:#4a4a4a;-webkit-text-stroke:0.5px #4a4a4a;letter-spacing:0.55px;left:1403.69px;">14</div>
<div class="t" style="top:581px;font-size:19.913px;line-height:19.913px;color:#5e5e5e;left:95.89px;transform:scaleX(0.9851);transform-origin:0 0;-webkit-text-stroke:0.4px #fff;">Risk rating over time</div>
<div class="t" style="top:608px;font-size:11.628px;line-height:11.628px;color:#4f4f4f;-webkit-text-stroke:0.15px #4f4f4f;left:96.20px;transform:scaleX(1.0531);transform-origin:0 0;">Number of applications</div>
<div class="t" style="top:644px;font-size:12.400px;line-height:12.400px;color:#9a9a9a;-webkit-text-stroke:0.15px #9a9a9a;left:117.92px;">5</div>
<div class="t" style="top:703px;font-size:12.400px;line-height:12.400px;color:#9a9a9a;-webkit-text-stroke:0.15px #9a9a9a;left:118.01px;">1</div>
<div class="t" style="top:732px;font-size:12.400px;line-height:12.400px;color:#9a9a9a;-webkit-text-stroke:0.15px #9a9a9a;left:117.89px;">0</div>
<div class="t" style="top:746px;font-size:12.400px;line-height:12.400px;color:#9a9a9a;-webkit-text-stroke:0.15px #9a9a9a;left:129.66px;">09</div>
<div class="t" style="top:746px;font-size:12.400px;line-height:12.400px;color:#9a9a9a;-webkit-text-stroke:0.15px #9a9a9a;left:288.73px;">10</div>
<div class="t" style="top:746px;font-size:12.400px;line-height:12.400px;color:#9a9a9a;-webkit-text-stroke:0.15px #9a9a9a;left:448.59px;">11</div>
<div class="t" style="top:746px;font-size:12.400px;line-height:12.400px;color:#9a9a9a;-webkit-text-stroke:0.15px #9a9a9a;left:607.49px;">12</div>
<div class="t" style="top:746px;font-size:12.400px;line-height:12.400px;color:#9a9a9a;-webkit-text-stroke:0.15px #9a9a9a;left:766.80px;">13</div>
<div class="t" style="top:746px;font-size:12.400px;line-height:12.400px;color:#9a9a9a;-webkit-text-stroke:0.15px #9a9a9a;left:926.06px;">14</div>
<div class="t" style="top:746px;font-size:12.400px;line-height:12.400px;color:#9a9a9a;-webkit-text-stroke:0.15px #9a9a9a;left:1085.49px;">15</div>
<div class="t" style="top:746px;font-size:12.400px;line-height:12.400px;color:#9a9a9a;-webkit-text-stroke:0.15px #9a9a9a;left:1244.85px;">16</div>
<div class="t" style="top:746px;font-size:12.400px;line-height:12.400px;color:#9a9a9a;-webkit-text-stroke:0.15px #9a9a9a;left:1404.24px;">17</div>
<div class="t" style="top:827px;font-size:19.913px;line-height:19.913px;color:#5e5e5e;left:97.05px;transform:scaleX(1.0055);transform-origin:0 0;-webkit-text-stroke:0.4px #fff;">Testing status over time</div>
<div class="t" style="top:854px;font-size:11.628px;line-height:11.628px;color:#4f4f4f;-webkit-text-stroke:0.15px #4f4f4f;left:96.20px;transform:scaleX(1.0531);transform-origin:0 0;">Number of applications</div>
<div class="t" style="top:890px;font-size:12.400px;line-height:12.400px;color:#9a9a9a;-webkit-text-stroke:0.15px #9a9a9a;left:117.92px;">5</div>
<div class="t" style="top:978px;font-size:12.400px;line-height:12.400px;color:#9a9a9a;-webkit-text-stroke:0.15px #9a9a9a;left:117.89px;">0</div>
<div class="t" style="top:992px;font-size:12.400px;line-height:12.400px;color:#9a9a9a;-webkit-text-stroke:0.15px #9a9a9a;left:129.66px;">09</div>
<div class="t" style="top:992px;font-size:12.400px;line-height:12.400px;color:#9a9a9a;-webkit-text-stroke:0.15px #9a9a9a;left:288.73px;">10</div>
<div class="t" style="top:992px;font-size:12.400px;line-height:12.400px;color:#9a9a9a;-webkit-text-stroke:0.15px #9a9a9a;left:448.59px;">11</div>
<div class="t" style="top:992px;font-size:12.400px;line-height:12.400px;color:#9a9a9a;-webkit-text-stroke:0.15px #9a9a9a;left:607.49px;">12</div>
<div class="t" style="top:992px;font-size:12.400px;line-height:12.400px;color:#9a9a9a;-webkit-text-stroke:0.15px #9a9a9a;left:766.80px;">13</div>
<div class="t" style="top:992px;font-size:12.400px;line-height:12.400px;color:#9a9a9a;-webkit-text-stroke:0.15px #9a9a9a;left:926.06px;">14</div>
<div class="t" style="top:992px;font-size:12.400px;line-height:12.400px;color:#9a9a9a;-webkit-text-stroke:0.15px #9a9a9a;left:1085.49px;">15</div>
<div class="t" style="top:992px;font-size:12.400px;line-height:12.400px;color:#9a9a9a;-webkit-text-stroke:0.15px #9a9a9a;left:1244.85px;">16</div>
<div class="t" style="top:992px;font-size:12.400px;line-height:12.400px;color:#9a9a9a;-webkit-text-stroke:0.15px #9a9a9a;left:1404.24px;">17</div>
<div class="t" style="top:1073px;font-size:19.913px;line-height:19.913px;color:#5e5e5e;left:95.68px;transform:scaleX(0.9933);transform-origin:0 0;-webkit-text-stroke:0.4px #fff;">Issues over time</div>
<div class="t" style="top:1100px;font-size:11.628px;line-height:11.628px;color:#4f4f4f;-webkit-text-stroke:0.15px #4f4f4f;left:96.21px;transform:scaleX(1.0370);transform-origin:0 0;">Number of issues</div>
<div class="t" style="top:1136px;font-size:12.400px;line-height:12.400px;color:#9a9a9a;-webkit-text-stroke:0.15px #9a9a9a;left:104.09px;">500</div>
<div class="t" style="top:1183px;font-size:12.400px;line-height:12.400px;color:#9a9a9a;-webkit-text-stroke:0.15px #9a9a9a;left:104.09px;">100</div>
<div class="t" style="top:1224px;font-size:12.400px;line-height:12.400px;color:#9a9a9a;-webkit-text-stroke:0.15px #9a9a9a;left:117.89px;">0</div>
<div class="t" style="top:1238px;font-size:12.400px;line-height:12.400px;color:#9a9a9a;-webkit-text-stroke:0.15px #9a9a9a;left:129.66px;">09</div>
<div class="t" style="top:1238px;font-size:12.400px;line-height:12.400px;color:#9a9a9a;-webkit-text-stroke:0.15px #9a9a9a;left:288.73px;">10</div>
<div class="t" style="top:1238px;font-size:12.400px;line-height:12.400px;color:#9a9a9a;-webkit-text-stroke:0.15px #9a9a9a;left:448.59px;">11</div>
<div class="t" style="top:1238px;font-size:12.400px;line-height:12.400px;color:#9a9a9a;-webkit-text-stroke:0.15px #9a9a9a;left:607.49px;">12</div>
<div class="t" style="top:1238px;font-size:12.400px;line-height:12.400px;color:#9a9a9a;-webkit-text-stroke:0.15px #9a9a9a;left:766.80px;">13</div>
<div class="t" style="top:1238px;font-size:12.400px;line-height:12.400px;color:#9a9a9a;-webkit-text-stroke:0.15px #9a9a9a;left:926.06px;">14</div>
<div class="t" style="top:1238px;font-size:12.400px;line-height:12.400px;color:#9a9a9a;-webkit-text-stroke:0.15px #9a9a9a;left:1085.49px;">15</div>
<div class="t" style="top:1238px;font-size:12.400px;line-height:12.400px;color:#9a9a9a;-webkit-text-stroke:0.15px #9a9a9a;left:1244.85px;">16</div>
<div class="t" style="top:1238px;font-size:12.400px;line-height:12.400px;color:#9a9a9a;-webkit-text-stroke:0.15px #9a9a9a;left:1404.24px;">17</div>
<div style="left:187px;top:936px;width:97px;height:74px;background:#fff;border:1px solid #cccccc;box-sizing:border-box;box-shadow:1px 1px 2px rgba(0,0,0,0.12);"></div>
<div class="t" style="top:943px;font-size:11.337px;line-height:11.337px;color:#111;font-weight:700;left:192.80px;transform:scaleX(1.0487);transform-origin:0 0;">Mar 10, 2021</div>
<div style="left:193px;top:962px;width:6px;height:6px;background:#e21f26;"></div>
<div class="t" style="top:959px;font-size:11.337px;line-height:11.337px;color:#222;left:203.01px;transform:scaleX(1.0682);transform-origin:0 0;">Not started: <b>2</b></div>
<div style="left:193px;top:978px;width:6px;height:6px;background:#f3c61e;"></div>
<div class="t" style="top:975px;font-size:11.337px;line-height:11.337px;color:#222;left:202.90px;transform:scaleX(1.0590);transform-origin:0 0;">In progress: <b>5</b></div>
<div style="left:193px;top:993px;width:6px;height:6px;background:#1fae5b;"></div>
<div class="t" style="top:991px;font-size:11.337px;line-height:11.337px;color:#222;left:203.40px;transform:scaleX(1.0540);transform-origin:0 0;">Completed: <b>0</b></div>
</body></html>
